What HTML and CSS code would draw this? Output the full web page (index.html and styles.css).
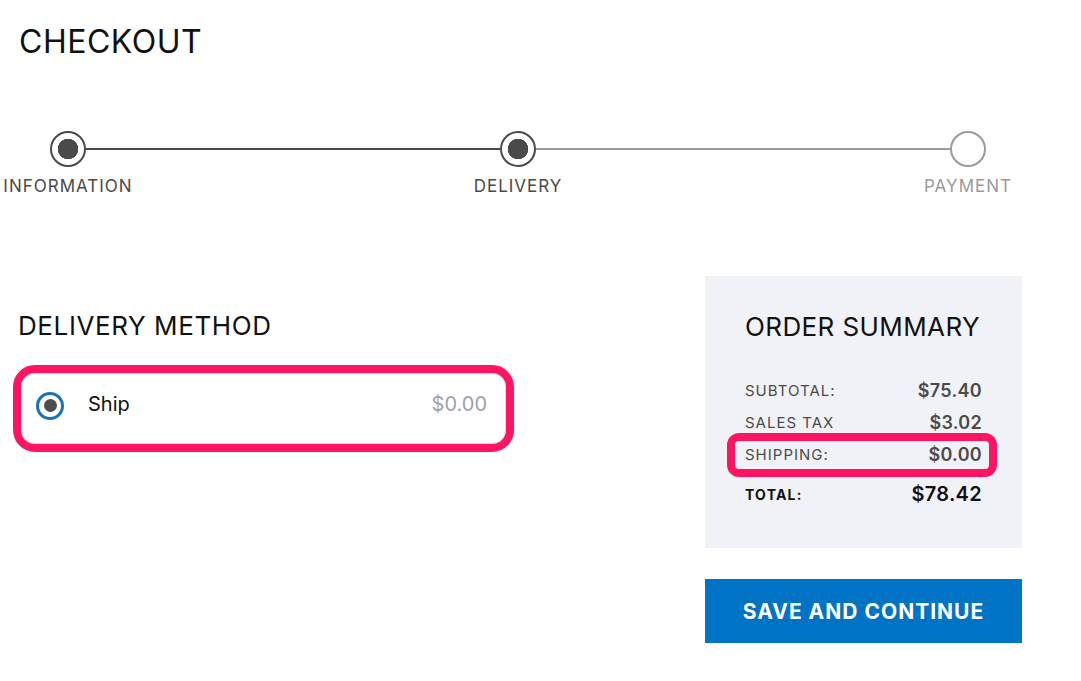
FILE: index.html
```html
<!DOCTYPE html>
<html>
  <head>
    <meta charset="utf-8" />
    <title>Checkout - Delivery</title>
    <link rel="stylesheet" href="styles.css">
  </head>
  <body>
    <h1 class="pageTitle">CHECKOUT</h1>

    <!-- STEPPER -->
    <div class="stepper">
      <div class="stepDot done"></div>
      <div class="stepLine done"></div>
      <div class="stepDot done"></div>
      <div class="stepLine"></div>
      <div class="stepDot"></div>
      <div class="stepLabel done">INFORMATION</div>
      <div></div>
      <div class="stepLabel done">DELIVERY</div>
      <div></div>
      <div class="stepLabel">PAYMENT</div>
    </div>

    <div class="checkoutMain">
      <!-- DELIVERY METHOD -->
      <div class="deliveryColumn">
        <h2 class="sectionTitle">DELIVERY METHOD</h2>
        <label class="methodCard highlighted">
          <span class="radio"><span class="radioDot"></span></span>
          <span class="methodName">Ship</span>
          <span class="methodPrice">$0.00</span>
        </label>
      </div>

      <!-- ORDER SUMMARY -->
      <div class="summaryColumn">
        <div class="summaryBox">
          <h2 class="sectionTitle">ORDER SUMMARY</h2>
          <div class="summaryRow">
            <span class="summaryLabel">SUBTOTAL:</span>
            <span class="summaryValue">$75.40</span>
          </div>
          <div class="summaryRow">
            <span class="summaryLabel">SALES TAX</span>
            <span class="summaryValue">$3.02</span>
          </div>
          <div class="summaryRow highlightedRow">
            <span class="summaryLabel">SHIPPING:</span>
            <span class="summaryValue">$0.00</span>
          </div>
          <div class="summaryRow totalRow">
            <span class="summaryLabel">TOTAL:</span>
            <span class="summaryValue">$78.42</span>
          </div>
        </div>
        <button class="saveButton">SAVE AND CONTINUE</button>
      </div>
    </div>
  </body>
</html>
```

FILE: styles.css
```css
body {
  margin: 0;
  padding: 0 18px;
  font-family: Inter, "Noto Sans", sans-serif;
  color: #111;
  background: #fff;
}

h1.pageTitle {
  margin: 22px 0 0 1px;
  font-size: 32px;
  line-height: 40px;
  font-weight: 400;
  letter-spacing: 0.5px;
}

/* stepper */
div.stepper {
  display: grid;
  grid-template-columns: 36px 1fr 36px 1fr 36px;
  width: 936px;
  margin: 69px 0 0 32px;
}
div.stepDot {
  box-sizing: border-box;
  width: 36px;
  height: 36px;
  border: 2px solid #9a9a9a;
  border-radius: 50%;
  background: #fff;
}
div.stepDot.done {
  border-color: #4a4a4a;
  background: radial-gradient(circle, #4a4a4a 0 10px, #fff 10.5px);
}
div.stepLine {
  align-self: center;
  height: 2px;
  background: #9a9a9a;
}
div.stepLine.done {
  background: #4a4a4a;
}
div.stepLabel {
  display: flex;
  justify-content: center;
  margin-top: 9px;
  white-space: nowrap;
  font-size: 17px;
  line-height: 20px;
  letter-spacing: 1px;
  color: #9a9a9a;
}
div.stepLabel.done {
  color: #4a4a4a;
}

/* main */
div.checkoutMain {
  display: flex;
  justify-content: space-between;
  width: 1004px;
  margin-top: 80px;
}
h2.sectionTitle {
  margin: 0;
  white-space: nowrap;
  font-size: 26px;
  line-height: 32px;
  font-weight: 400;
  letter-spacing: 0.6px;
}

div.deliveryColumn {
  width: 490px;
  padding-top: 34px;
}
label.methodCard {
  position: relative;
  box-sizing: border-box;
  display: flex;
  align-items: center;
  width: 485px;
  height: 71px;
  margin: 31px 0 0 3px;
  padding: 0 18px 6px 14px;
  border: 1px solid #dcdcdc;
  border-radius: 14px;
}
label.highlighted::after {
  content: "";
  position: absolute;
  inset: -9px;
  border: 8px solid #ff1461;
  border-radius: 22px;
}
span.radio {
  box-sizing: border-box;
  display: flex;
  align-items: center;
  justify-content: center;
  width: 28px;
  height: 28px;
  border: 3px solid #1a73b8;
  border-radius: 50%;
}
span.radioDot {
  width: 13px;
  height: 13px;
  border-radius: 50%;
  background: #4d4d4d;
}
span.methodName {
  margin: 0 0 3px 24px;
  font-size: 20px;
}
span.methodPrice {
  margin: 0 0 3px auto;
  font-size: 20px;
  color: #9ca1ae;
}

div.summaryColumn {
  width: 317px;
}
div.summaryBox {
  padding: 35px 40px 38px 40px;
  background: #f1f2f7;
}
div.summaryBox h2.sectionTitle {
  margin-bottom: 31px;
  letter-spacing: 0.4px;
}
div.summaryRow {
  position: relative;
  display: flex;
  justify-content: space-between;
  align-items: center;
  height: 32px;
  color: #4a4a4a;
}
span.summaryLabel {
  font-size: 15px;
  letter-spacing: 1px;
}
span.summaryValue {
  font-size: 18px;
  font-weight: 600;
  letter-spacing: 0.3px;
}
div.totalRow {
  margin-top: 8px;
  color: #111;
}
div.totalRow span.summaryLabel {
  font-size: 14px;
  font-weight: 700;
  letter-spacing: 1.2px;
}
div.totalRow span.summaryValue {
  font-size: 20px;
}
div.highlightedRow::after {
  content: "";
  position: absolute;
  top: -5px;
  bottom: -7px;
  left: -18px;
  right: -15px;
  border: 8px solid #ff1461;
  border-radius: 12px;
}

button.saveButton {
  display: block;
  width: 100%;
  height: 64px;
  margin-top: 31px;
  border: none;
  background: #0073c4;
  color: #fff;
  font-family: Inter, "Noto Sans", sans-serif;
  font-size: 21px;
  font-weight: 700;
  letter-spacing: 1px;
}
```
